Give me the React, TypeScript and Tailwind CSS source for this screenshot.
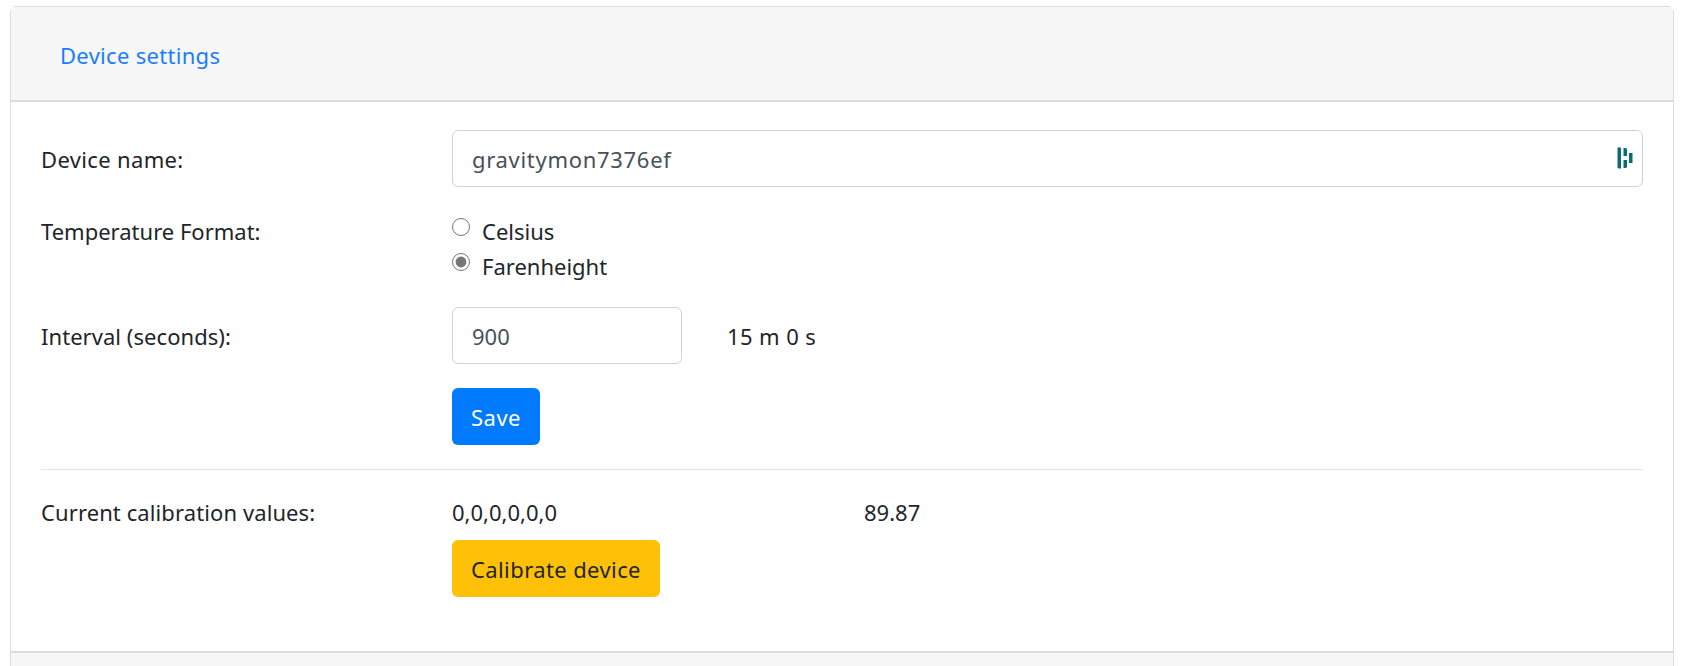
import { useState } from "react";

function Row({ label, children, className, labelClass }: { label: string; children: React.ReactNode; className?: string; labelClass?: string }) {
    return (
        <div className={`flex ${className ?? ""}`}>
            <label className={`w-[411px] shrink-0 ${labelClass ?? ""}`}>{label}</label>
            <div className="flex-1">{children}</div>
        </div>
    );
}

function DashlaneIcon() {
    return (
        <svg width="16" height="22" viewBox="0 0 16 22" className="absolute right-[10px] top-[17px]">
            <path d="M0.5 0.5 H4 V21.5 H1.5 L0.5 20.5 Z" fill="#0b6a78" />
            <path d="M6.5 1 H9 L10 2 V9 H6.5 Z M6.5 13 H10 V20 L9 21 H6.5 Z" fill="#0b6a78" />
            <path d="M12 6 H15.5 V16 H12 Z" fill="#0b6a78" />
        </svg>
    );
}

export default function App() {
    const [format, setFormat] = useState("F");

    return (
        <div className="h-[666px] overflow-hidden bg-white pl-[10px] pr-[10px] pt-[6px] font-['Noto_Sans',sans-serif] text-[22px] leading-[36px] text-[#212529]">
            <div className="rounded-[6px] border-[1.5px] border-[#dcdcdc]">
                <div className="h-[95px] border-b-[2px] border-[#dcdcdc] bg-[#f7f7f7] pl-[49px] pt-[30px]">
                    <a className="tracking-[0.3px] text-[#1a7dff]">Device settings</a>
                </div>

                <div className="px-[30px] pb-[54px] pt-[28px]">
                    <Row label="Device name:" className="items-center" labelClass="tracking-[0.35px]">
                        <div className="relative">
                            <input
                                readOnly
                                value="gravitymon7376ef"
                                className="h-[57px] w-full rounded-[6px] border-[1.5px] border-[#ced4da] px-[19px] tracking-[0.7px] text-[#495057] outline-none"
                            />
                            <DashlaneIcon />
                        </div>
                    </Row>

                    <Row label="Temperature Format:" className="mt-[26px]">
                        <div className="flex flex-col">
                            <label className="flex h-[35px] items-center gap-[12px]">
                                <input
                                    type="radio"
                                    checked={format === "C"}
                                    onChange={() => setFormat("C")}
                                    className="mb-[8px] size-[18px] accent-[#767676]"
                                />
                                Celsius
                            </label>
                            <label className="flex h-[35px] items-center gap-[12px]">
                                <input
                                    type="radio"
                                    checked={format === "F"}
                                    onChange={() => setFormat("F")}
                                    className="mb-[8px] size-[18px] accent-[#767676]"
                                />
                                Farenheight
                            </label>
                        </div>
                    </Row>

                    <Row label="Interval (seconds):" className="mt-[24px] items-center" labelClass="tracking-[0.05px]">
                        <div className="flex items-center gap-[45px]">
                            <input
                                readOnly
                                value="900"
                                className="h-[57px] w-[230px] rounded-[6px] border-[1.5px] border-[#ced4da] px-[19px] text-[#495057] outline-none"
                            />
                            <span className="tracking-[0.4px]">15 m 0 s</span>
                        </div>
                    </Row>

                    <div className="mt-[24px] pl-[411px]">
                        <button className="h-[57px] rounded-[6px] bg-[#007bff] px-[19px] tracking-[0.5px] text-white">Save</button>
                    </div>

                    <hr className="mt-[24px] border-t-[1.5px] border-[#e2e2e2]" />

                    <Row label="Current calibration values:" className="mt-[24px]" labelClass="tracking-[0.1px]">
                        <div className="flex">
                            <span className="w-[412px]">0,0,0,0,0,0</span>
                            <span>89.87</span>
                        </div>
                        <button className="mt-[10px] block h-[57px] rounded-[6px] bg-[#ffc107] px-[19px] tracking-[0.4px] text-[#212529]">
                            Calibrate device
                        </button>
                    </Row>
                </div>

                <div className="h-[40px] border-t-[2px] border-[#dcdcdc] bg-[#f7f7f7]" />
            </div>
        </div>
    );
}
